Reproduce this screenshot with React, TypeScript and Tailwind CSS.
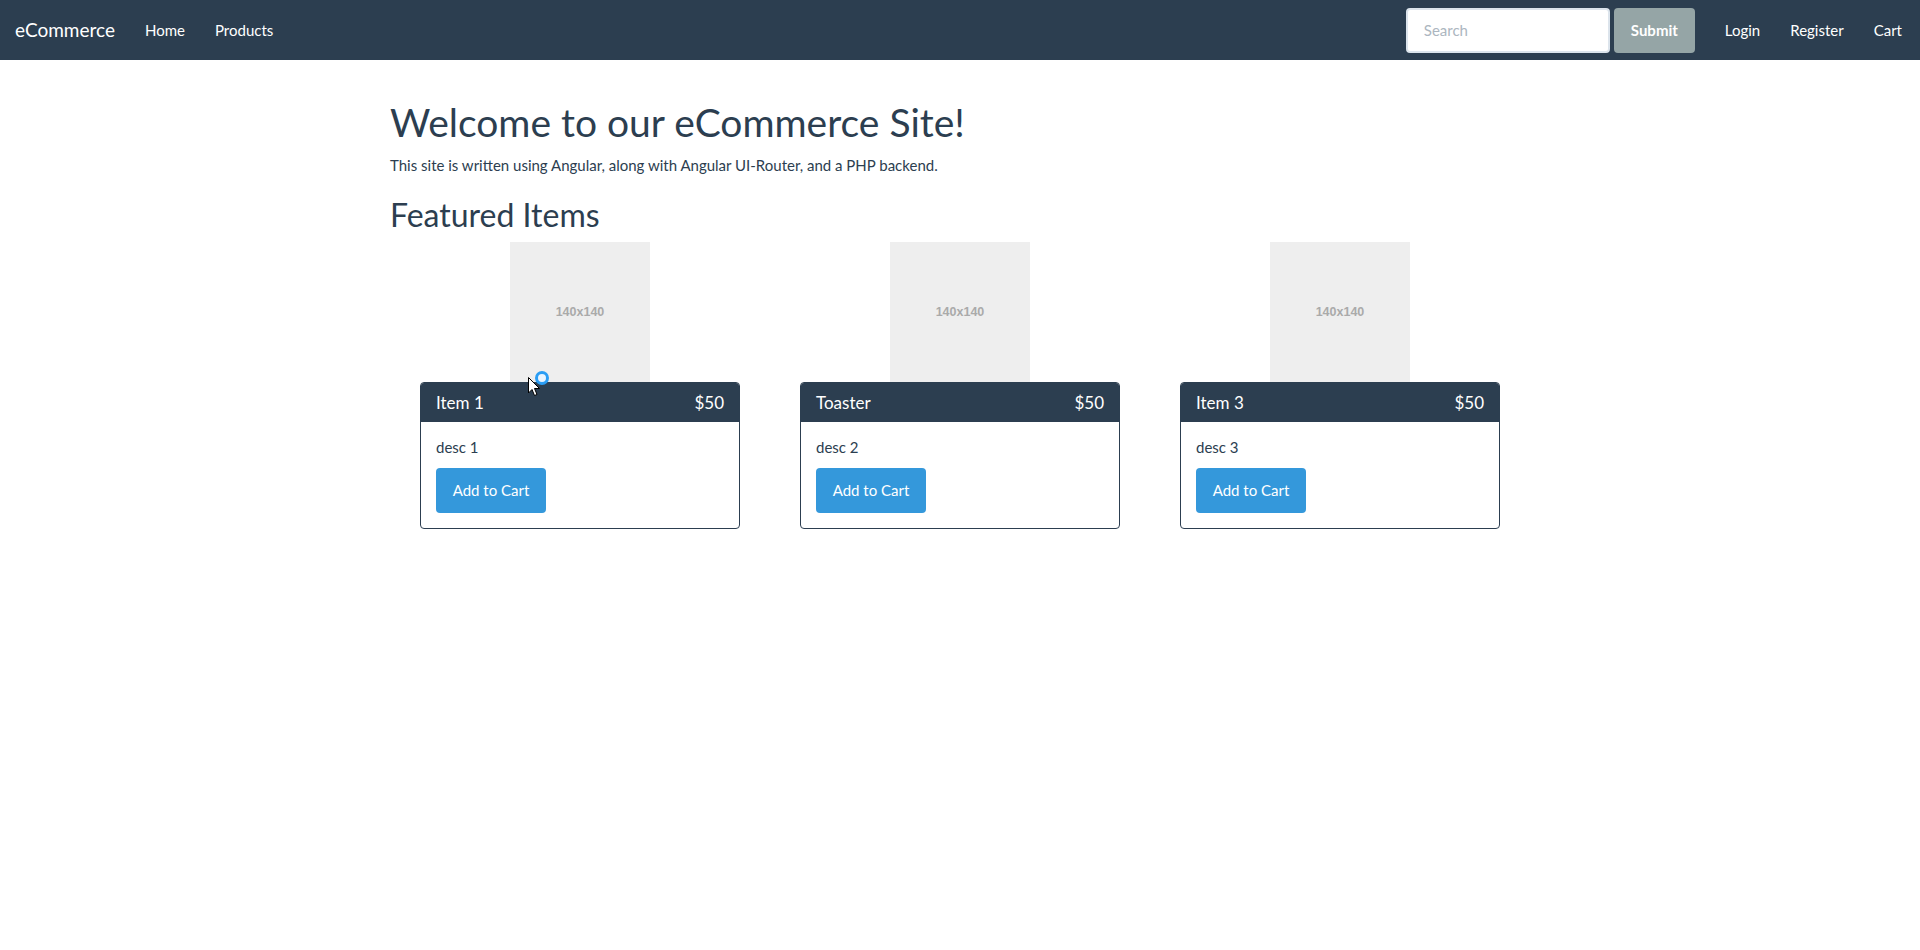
import React from "react";

const items = [
  { name: "Item 1", price: "$50", desc: "desc 1" },
  { name: "Toaster", price: "$50", desc: "desc 2" },
  { name: "Item 3", price: "$50", desc: "desc 3" },
];

export default function App() {
  return (
    <div
      className="relative min-h-[950px] bg-white text-[15px] text-[#2c3e50]"
      style={{ fontFamily: "Lato, 'Noto Sans', sans-serif" }}
    >
      <nav className="h-[60px] bg-[#2c3e50] px-[15px] flex items-center text-white">
        <a className="px-[15px] h-[60px] flex items-center text-[19px] -ml-[15px] leading-[20px]">eCommerce</a>
        <a className="px-[15px] h-[60px] flex items-center leading-[20px]">Home</a>
        <a className="px-[15px] h-[60px] flex items-center leading-[20px]">Products</a>
        <div className="flex-1" />
        <form className="flex items-center gap-[4px] px-[15px]" onSubmit={(e) => e.preventDefault()}>
          <input
            placeholder="Search"
            className="w-[204px] h-[45px] bg-white border-2 border-[#dce4ec] rounded-[4px] px-[16px] text-[15px] text-[#2c3e50] placeholder:text-[#acb6c0] outline-none"
          />
          <button className="h-[45px] w-[81px] rounded-[4px] bg-[#95a5a6] text-white text-[15px] font-bold">Submit</button>
        </form>
        <div className="flex -mr-[12px]">
          <a className="px-[15px] h-[60px] flex items-center leading-[20px]">Login</a>
          <a className="px-[15px] h-[60px] flex items-center leading-[20px]">Register</a>
          <a className="px-[15px] h-[60px] flex items-center leading-[20px]">Cart</a>
        </div>
      </nav>

      <div className="w-[1170px] mx-auto px-[15px]">
        <h1 className="mt-[41px] mb-[11px] text-[39px] leading-[1.1]">Welcome to our eCommerce Site!</h1>
        <p className="leading-[21px]">This site is written using Angular, along with Angular UI-Router, and a PHP backend.</p>
        <h2 className="mt-[21px] mb-[10px] text-[32px] leading-[1.1]">Featured Items</h2>
        <div className="grid grid-cols-3">
          {items.map((it) => (
            <div key={it.desc} className="flex flex-col items-center">
              <div
                className="w-[140px] h-[140px] bg-[#eeeeee] flex items-center justify-center text-[#aaaaaa] font-bold text-[12.5px]"
                style={{ fontFamily: "'Liberation Sans', Arial, sans-serif" }}
              >
                140x140
              </div>
              <div className="w-[320px] border border-[#2c3e50] rounded-[4px] overflow-hidden">
                <div className="bg-[#2c3e50] text-white h-[39px] px-[15px] flex items-center justify-between text-[17px]">
                  <span>{it.name}</span>
                  <span>{it.price}</span>
                </div>
                <div className="p-[15px]">
                  <p className="leading-[21px] mb-[10px]">{it.desc}</p>
                  <button className="h-[45px] w-[110px] bg-[#3498db] text-white rounded-[4px] text-[15px]">Add to Cart</button>
                </div>
              </div>
            </div>
          ))}
        </div>
      </div>

      {/* cursor overlay */}
      <svg className="absolute left-[528px] top-[377px]" width="13" height="20" viewBox="0 0 13 20">
        <path d="M0.5 0.5 L0.5 16 L4 12.5 L6.5 18.5 L9 17.5 L6.5 11.5 L11.5 11.5 Z" fill="white" stroke="black" strokeWidth="1" />
      </svg>
      <div className="absolute left-[535px] top-[371px] w-[14px] h-[14px] rounded-full border-[3px] border-[#2a9df4] bg-[#e8f4ff]" />
    </div>
  );
}
